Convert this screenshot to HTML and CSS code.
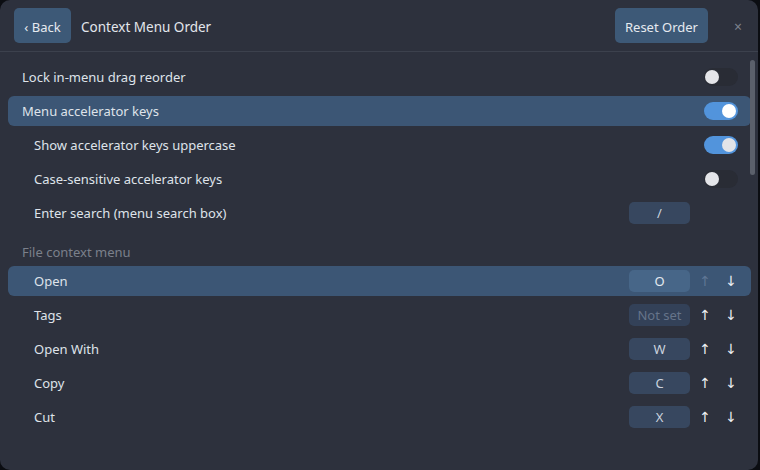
FILE: index.html
```html
<!DOCTYPE html>
<html>
<head>
<meta charset="utf-8">
<link rel="stylesheet" href="styles.css">
</head>
<body>
<div class="panel">
  <header class="head">
    <button class="btn back">‹ Back</button>
    <div class="title">Context Menu Order</div>
    <div class="spacer"></div>
    <button class="btn reset">Reset Order</button>
    <span class="close">×</span>
  </header>
  <div class="body">
    <div class="list">
      <div class="row"><span class="label">Lock in-menu drag reorder</span><div class="ctrl"><span class="toggle"></span></div></div>
      <div class="row active"><span class="label">Menu accelerator keys</span><div class="ctrl"><span class="toggle on"></span></div></div>
      <div class="row sub"><span class="label">Show accelerator keys uppercase</span><div class="ctrl"><span class="toggle on dim"></span></div></div>
      <div class="row sub"><span class="label">Case-sensitive accelerator keys</span><div class="ctrl"><span class="toggle"></span></div></div>
      <div class="row sub"><span class="label">Enter search (menu search box)</span><div class="ctrl start"><span class="key">/</span></div></div>
      <div class="row section"><span class="label">File context menu</span></div>
      <div class="row sub active"><span class="label">Open</span><div class="ctrl start"><span class="key">O</span><span class="arrow disabled">↑</span><span class="arrow">↓</span></div></div>
      <div class="row sub"><span class="label">Tags</span><div class="ctrl start"><span class="key empty">Not set</span><span class="arrow">↑</span><span class="arrow">↓</span></div></div>
      <div class="row sub"><span class="label">Open With</span><div class="ctrl start"><span class="key">W</span><span class="arrow">↑</span><span class="arrow">↓</span></div></div>
      <div class="row sub"><span class="label">Copy</span><div class="ctrl start"><span class="key">C</span><span class="arrow">↑</span><span class="arrow">↓</span></div></div>
      <div class="row sub"><span class="label">Cut</span><div class="ctrl start"><span class="key">X</span><span class="arrow">↑</span><span class="arrow">↓</span></div></div>
    </div>
    <div class="thumb"></div>
  </div>
</div>
</body>
</html>
```
FILE: styles.css
```css
html, body {
  margin: 0;
  padding: 0;
  background: #0b0d12;
  width: 760px;
  height: 470px;
  overflow: hidden;
}
.panel {
  width: 758px;
  height: 470px;
  background: #2d313d;
  border-radius: 10px;
  font-family: "Noto Sans", "Open Sans", sans-serif;
  font-size: 13px;
  color: #dfe3ea;
  display: flex;
  flex-direction: column;
  overflow: hidden;
}
.head {
  height: 52px;
  box-sizing: border-box;
  border-bottom: 1px solid #3c414d;
  display: flex;
  align-items: center;
  padding: 0 16px 0 14px;
}
.btn {
  height: 35px;
  border: none;
  border-radius: 5px;
  background: #3d5977;
  color: #e6eaf0;
  font-family: inherit;
  font-size: 13px;
  padding: 2px 0 0;
}
.btn.back { width: 57px; }
.btn.reset { width: 93px; }
.title {
  margin-left: 10px;
  margin-top: 2px;
  color: #e3e6ec;
  font-size: 13.5px;
}
.spacer { flex: 1; }
.close {
  margin-left: 26px;
  margin-top: 2px;
  color: #7d828e;
  font-size: 14px;
}
.body {
  position: relative;
  flex: 1;
}
.list {
  padding: 10px 7px 0 8px;
  display: flex;
  flex-direction: column;
  gap: 4px;
}
.row {
  height: 30px;
  display: flex;
  align-items: center;
  padding-left: 14px;
  border-radius: 6px;
}
.row.sub { padding-left: 26px; }
.row.active { background: #3c5675; }
.row.section { align-items: flex-end; height: 29px; padding-bottom: 1px; }
.row.section .label { color: #7b808b; }
.label { flex: 1; }
.ctrl {
  width: 115px;
  display: flex;
  align-items: center;
  justify-content: flex-end;
  padding-right: 6px;
}
.ctrl.start {
  justify-content: flex-start;
  padding-right: 0;
  width: 122px;
}
.toggle {
  width: 34px;
  height: 18px;
  border-radius: 9px;
  background: #292c35;
  position: relative;
  margin-right: 7px;
}
.toggle::after {
  content: "";
  position: absolute;
  left: 1px;
  top: 2px;
  width: 14px;
  height: 14px;
  border-radius: 50%;
  background: #e4e5e9;
}
.toggle.on { background: #5294dc; }
.toggle.on::after { left: auto; right: 2px; background: #ffffff; }
.toggle.on.dim::after { background: #e2e4e8; }
.key {
  width: 61px;
  height: 22px;
  border-radius: 5px;
  background: #37475f;
  color: #cbd3de;
  display: flex;
  align-items: center;
  justify-content: center;
}
.active .key { background: #476688; color: #e4e9f0; }
.key.empty { color: #66748a; background: #334158; }
.arrow {
  width: 26px;
  text-align: center;
  color: #eceef2;
  font-family: "DejaVu Sans", sans-serif;
  font-size: 14px;
  line-height: 18px;
}
.key + .arrow { margin-left: 2px; }
.arrow.disabled { color: #5e7594; }
.thumb {
  position: absolute;
  right: 3px;
  top: 8px;
  width: 5px;
  height: 115px;
  border-radius: 3px;
  background: #5b606b;
}
```
